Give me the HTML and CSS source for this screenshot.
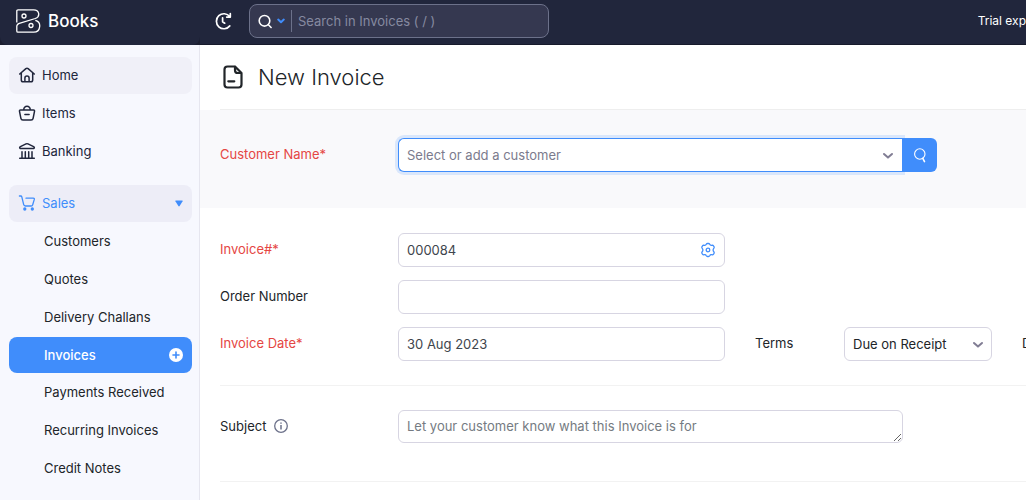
FILE: index.html
```html
<!DOCTYPE html>
<html lang="en">
<head>
<meta charset="utf-8">
<title>New Invoice | Books</title>
<meta name="viewport" content="width=device-width, initial-scale=1">
<link rel="stylesheet" href="styles.css">
</head>
<body>
<header class="topbar">
  <a class="brand" href="#">
    <svg class="brand-logo" width="26" height="26" viewBox="0 0 26 26" fill="none" stroke="currentColor" stroke-width="1.300" stroke-linejoin="round">
      <path d="M1.800 14.500V3q0-1.200 1.200-1.200h15.700c5.600 0 7 6.700 1.600 8.700L4.300 15.300q-2.500.8-2.500 3v4.700q0 1.200 1.200 1.200h15.700c7 0 8.300-10.200 1.600-11.800"/>
      <circle cx="9" cy="8" r="2"/><circle cx="16" cy="17.500" r="2"/>
    </svg>
    <span>Books</span>
  </a>
  <div class="topbar-tools">
    <button class="recent" type="button" aria-label="Recent activity">
      <svg width="18" height="18" viewBox="0 0 18 18" fill="none" stroke="currentColor" stroke-width="1.700" stroke-linecap="round" stroke-linejoin="round">
        <path d="M15.800 4.600A7.500 7.500 0 1 0 15.800 13.900M16.300 1.600v3.500h-3.600M8.600 5.800v4l2.100 1.400"/>
      </svg>
    </button>
    <div class="search">
      <button class="search-scope" type="button" aria-label="Choose search scope">
        <svg width="15" height="15" viewBox="0 0 15 15" fill="none" stroke="currentColor" stroke-width="1.600" stroke-linecap="round"><circle cx="6.500" cy="6.800" r="5.300"/><path d="m10.400 10.800 2.700 2.700"/></svg>
        <svg class="scope-arrow" width="8" height="6" viewBox="0 0 8 6" fill="none" stroke="currentColor" stroke-width="2" stroke-linecap="round" stroke-linejoin="round"><path d="m1.200 1.600 2.800 2.600 2.800-2.600"/></svg>
      </button>
      <input class="search-input" type="text" aria-label="Search in Invoices" placeholder="Search in Invoices ( / )">
    </div>
    <span class="trial">Trial exp</span>
  </div>
</header>
<div class="workspace">
  <nav class="sidebar" aria-label="Main">
    <a class="nav-item nav-hover" href="#">
      <svg width="18" height="18" viewBox="0 0 18 18" fill="none" stroke="currentColor" stroke-width="1.500" stroke-linecap="round" stroke-linejoin="round"><path d="M1.700 8 7.900 2.600q1.100-.9 2.200 0L16.300 8M3.300 7v7q0 1.800 1.800 1.800h7.800q1.800 0 1.800-1.800V7M6.900 15.600v-3.400a2.100 2.100 0 0 1 4.200 0v3.400"/></svg>
      <span>Home</span>
    </a>
    <a class="nav-item" href="#">
      <svg width="18" height="18" viewBox="0 0 18 18" fill="none" stroke="currentColor" stroke-width="1.500" stroke-linecap="round" stroke-linejoin="round"><path d="M2.600 6h12.800q1.300 0 1.100 1.300l-1.400 7q-.3 1.700-2 1.700H4.900q-1.700 0-2-1.700l-1.400-7Q1.300 6 2.600 6ZM5.800 5.700A3.200 3.200 0 0 1 9 2.300a3.200 3.200 0 0 1 3.200 3.400M6.900 10.500h4.200"/></svg>
      <span>Items</span>
    </a>
    <a class="nav-item" href="#">
      <svg width="18" height="18" viewBox="0 0 18 18" fill="none" stroke="currentColor" stroke-width="1.500" stroke-linecap="round" stroke-linejoin="round"><path d="M2.400 6.600q-1.500-1 0-1.900L8 1.900q1-.5 2 0l5.600 2.800q1.500.9 0 1.900ZM1.700 16.300h14.600M4 9.800v6M7.300 9.800v6M10.700 9.800v6M14 9.800v6"/></svg>
      <span>Banking</span>
    </a>
    <a class="nav-item nav-group" href="#" aria-expanded="true">
      <svg width="18" height="18" viewBox="0 0 18 18" fill="none" stroke="currentColor" stroke-width="1.300" stroke-linecap="round" stroke-linejoin="round"><path d="M1.400 2h1.300q.9 0 1.100.9l1.900 7.800q.3 1.300 1.700 1.300h5.700q1.300 0 1.600-1.200l1.600-5.400q.3-1.200-1-1.200H8"/><circle cx="6.800" cy="15" r="1" fill="currentColor"/><circle cx="14.300" cy="15" r="1" fill="currentColor"/></svg>
      <span>Sales</span>
      <svg class="nav-end" width="8" height="7" viewBox="0 0 8 7" fill="currentColor"><path d="M.8.500h6.400q.8 0 .4.700L4.600 6q-.6.800-1.200 0L.4 1.200Q0 .5.800.5Z"/></svg>
    </a>
    <a class="nav-sub" href="#">Customers</a>
    <a class="nav-sub" href="#">Quotes</a>
    <a class="nav-sub" href="#">Delivery Challans</a>
    <a class="nav-sub nav-active" href="#" aria-current="page">
      <span>Invoices</span>
      <svg class="nav-end" width="14" height="14" viewBox="0 0 14 14"><circle cx="7" cy="7" r="7" fill="#fff"/><path d="M7 4v6M4 7h6" stroke="#408dfb" stroke-width="1.600" stroke-linecap="round"/></svg>
    </a>
    <a class="nav-sub" href="#">Payments Received</a>
    <a class="nav-sub" href="#">Recurring Invoices</a>
    <a class="nav-sub" href="#">Credit Notes</a>
  </nav>
  <main class="content">
    <div class="page-head">
      <svg width="20" height="24" viewBox="0 0 20 24" fill="none" stroke="currentColor" stroke-width="2.200" stroke-linecap="round" stroke-linejoin="round"><path d="M12 1.500H4.500q-3 0-3 3v15q0 3 3 3h11q3 0 3-3V8L12 1.500v3.700Q12 8 14.800 8h3.700M5.300 16.300h6"/></svg>
      <h1>New Invoice</h1>
    </div>
    <form>
      <div class="customer">
        <div class="row">
          <label class="label required" for="customer">Customer Name*</label>
          <div class="customer-picker">
            <div class="select-wrap select-focus">
              <select class="field placeholder" id="customer"><option>Select or add a customer</option></select>
              <svg class="chevron" width="12" height="8" viewBox="0 0 12 8"><path d="m2 2 4 3.600L10 2"/></svg>
            </div>
            <button class="find" type="button" aria-label="Search customers">
              <svg width="14" height="16" viewBox="0 0 14 16" fill="none" stroke="currentColor" stroke-width="1.100" stroke-linecap="round"><circle cx="6.800" cy="7" r="5.200"/><path d="m9.800 11.400 1.700 3.200" stroke-width="1.600"/></svg>
            </button>
          </div>
        </div>
      </div>
      <div class="details">
        <div class="row">
          <label class="label required" for="number">Invoice#*</label>
          <div class="field-wrap">
            <input class="field" id="number" type="text" value="000084">
            <button class="gear" type="button" aria-label="Configure invoice numbers">
              <svg width="16" height="16" viewBox="0 0 16 16" fill="none" stroke="currentColor" stroke-width="1.300" stroke-linejoin="round"><path d="M6.300 2.300Q6.700 1.500 7.500 1.500h1q.8 0 1.200.8.500 1.100 1.700 1l.9-.1q.8 0 1.200.7l.5.800q.4.700-.1 1.400-.8 1-.8 1.900t.8 1.900q.5.700.1 1.400l-.5.800q-.4.700-1.200.7l-.9-.1q-1.200-.1-1.700 1-.4.800-1.200.8h-1q-.8 0-1.200-.8-.5-1.100-1.700-1l-.9.100q-.8 0-1.200-.7l-.5-.8q-.4-.7.100-1.400.8-1 .8-1.900t-.8-1.900q-.5-.7-.1-1.400l.5-.8q.4-.7 1.200-.7l.9.100q1.200.1 1.700-1Z"/><circle cx="8" cy="8" r="1.800"/></svg>
            </button>
          </div>
        </div>
        <div class="row">
          <label class="label" for="order">Order Number</label>
          <input class="field" id="order" type="text">
        </div>
        <div class="row row-date">
          <label class="label required" for="date">Invoice Date*</label>
          <input class="field" id="date" type="text" value="30 Aug 2023">
          <label class="label label-terms" for="terms">Terms</label>
          <div class="select-wrap">
            <select class="field" id="terms"><option>Due on Receipt</option></select>
            <svg class="chevron" width="12" height="8" viewBox="0 0 12 8"><path d="m2 2 4 3.600L10 2"/></svg>
          </div>
          <span class="label label-due">D</span>
        </div>
      </div>
      <div class="subject">
        <div class="row row-wide">
          <label class="label" for="subject">Subject
            <svg width="14" height="14" viewBox="0 0 14 14" class="info" fill="none" stroke="currentColor" stroke-width="1.300"><circle cx="7" cy="7" r="6.300"/><path d="M7 6v4.500M7 3.500v1.300" stroke-width="1.500"/></svg>
          </label>
          <textarea class="field" id="subject" rows="1" placeholder="Let your customer know what this Invoice is for"></textarea>
        </div>
      </div>
    </form>
  </main>
</div>
</body>
</html>
```
FILE: styles.css
```css
* { box-sizing: border-box; }

body {
  margin: 0;
  min-height: 100vh;
  display: flex;
  flex-direction: column;
  overflow: hidden;
  background: #fff;
  color: #212529;
  font: 13px/20px Inter, "Liberation Sans", sans-serif;
}

a { color: inherit; text-decoration: none; }
button { padding: 0; border: 0; background: none; color: inherit; cursor: pointer; }
input, select, textarea { font: inherit; color: inherit; }
svg { flex: none; display: block; }

/* Top bar */
.topbar {
  display: flex;
  height: 45px;
  background: #1b1e30;
  color: #fff;
}
.brand {
  flex: 0 0 200px;
  display: flex;
  align-items: center;
  gap: 7px;
  padding: 0 15px 4px;
  border-radius: 0 0 8px 8px;
  background: #21263c;
  font-size: 17px;
  font-weight: 500;
}
.topbar-tools {
  flex: 1;
  min-width: 0;
  display: flex;
  align-items: center;
  padding: 0 0 2px 14px;
  border-bottom: 1px solid #171a2b;
  background: #21263c;
  overflow: hidden;
}
.recent { margin-right: 17px; }
.search {
  flex: 0 0 300px;
  display: flex;
  align-items: center;
  height: 34px;
  border: 1px solid #6c718a;
  border-radius: 8px;
  background: #353850;
}
.search-scope {
  display: flex;
  align-items: center;
  gap: 4px;
  height: 22px;
  padding: 0 6px 0 8px;
  border-right: 1px solid #6c718a;
}
.scope-arrow { color: #408dfb; }
.search-input {
  flex: 1;
  min-width: 0;
  padding: 0 6px;
  border: 0;
  background: none;
  outline: 0;
}
.search-input::placeholder { color: #868aa0; opacity: 1; }
.trial {
  flex: 0 0 46px;
  margin-left: auto;
  font-size: 12px;
  font-weight: 400;
  white-space: nowrap;
}

/* Sidebar */
.workspace { flex: 1; display: flex; }
.sidebar {
  flex: 0 0 200px;
  display: flex;
  flex-direction: column;
  gap: 1px;
  padding: 12px 7px 12px 9px;
  border-right: 1px solid #e6e6ef;
  background: #f7f8fe;
}
.nav-item, .nav-sub {
  display: flex;
  align-items: center;
  height: 37px;
  padding: 0 9px 1px;
  border-radius: 8px;
}
.nav-item { gap: 6px; color: #21263c; }
.nav-sub { padding-left: 35px; }
.nav-hover { background: #f0f0f8; }
.nav-group { margin-top: 14px; background: #ededf7; color: #408dfb; }
.nav-active {
  height: 36px;
  padding-bottom: 0;
  background: #408dfb;
  color: #fff;
  font-weight: 500;
}
.nav-end { margin-left: auto; }

/* Page */
.content { flex: 1; min-width: 0; overflow: hidden; }
.page-head {
  display: flex;
  align-items: center;
  gap: 15px;
  height: 65px;
  margin-left: 20px;
  padding-left: 3px;
  border-bottom: 1px solid #eee;
}
h1 { margin: 0; font-size: 22px; line-height: 28px; font-weight: 300; }

.customer { padding: 28px 20px 36px; background: #f9f9fb; }
.details {
  display: grid;
  gap: 13px;
  margin-left: 20px;
  padding: 25px 0 24px;
  border-bottom: 1px solid #f2f2f2;
}
.subject {
  margin-left: 20px;
  padding: 24px 0 38px;
  border-bottom: 1px solid #f2f2f2;
}
.row {
  display: grid;
  grid-template-columns: 178px minmax(0, 327px);
  align-items: start;
}
.row-date { grid-template-columns: 178px 327px 119px 148px 40px; }
.row-wide { grid-template-columns: 178px minmax(0, 505px); }
.customer .row { grid-template-columns: 178px minmax(0, 539px); }

.label { display: flex; align-items: center; gap: 8px; padding-top: 6px; }
.label-terms, .label-due { padding-left: 30px; }
.required { color: #e54643; }
.info { color: #6c718a; }

.field {
  display: block;
  width: 100%;
  height: 34px;
  padding: 0 8px;
  border: 1px solid #d7d5e2;
  border-radius: 6px;
  background: #fff;
  color: #40454d;
  outline: 0;
}
textarea.field { height: 33px; padding: 5px 8px; resize: both; overflow: hidden; }
.field::placeholder { color: #757b82; opacity: 1; }
select.field { appearance: none; padding-right: 28px; color: #212529; }
select.placeholder { color: #7b7b8d; }

.field-wrap, .select-wrap { position: relative; }
.gear { position: absolute; right: 9px; top: 9px; color: #408dfb; }
.chevron {
  position: absolute;
  right: 8px;
  top: 14px;
  fill: none;
  stroke: #817d94;
  stroke-width: 2;
  stroke-linecap: round;
  stroke-linejoin: round;
  pointer-events: none;
}

.customer-picker { display: flex; }
.customer-picker .select-wrap { flex: 1; min-width: 0; }
.select-focus .field {
  border-color: #408dfb;
  border-right: 0;
  border-radius: 6px 0 0 6px;
  box-shadow: 0 0 0 3px #dae7fb;
}
.find {
  position: relative;
  flex: 0 0 35px;
  height: 34px;
  display: grid;
  place-items: center;
  border-radius: 0 6px 6px 0;
  background: #408dfb;
  color: #fff;
}
```
